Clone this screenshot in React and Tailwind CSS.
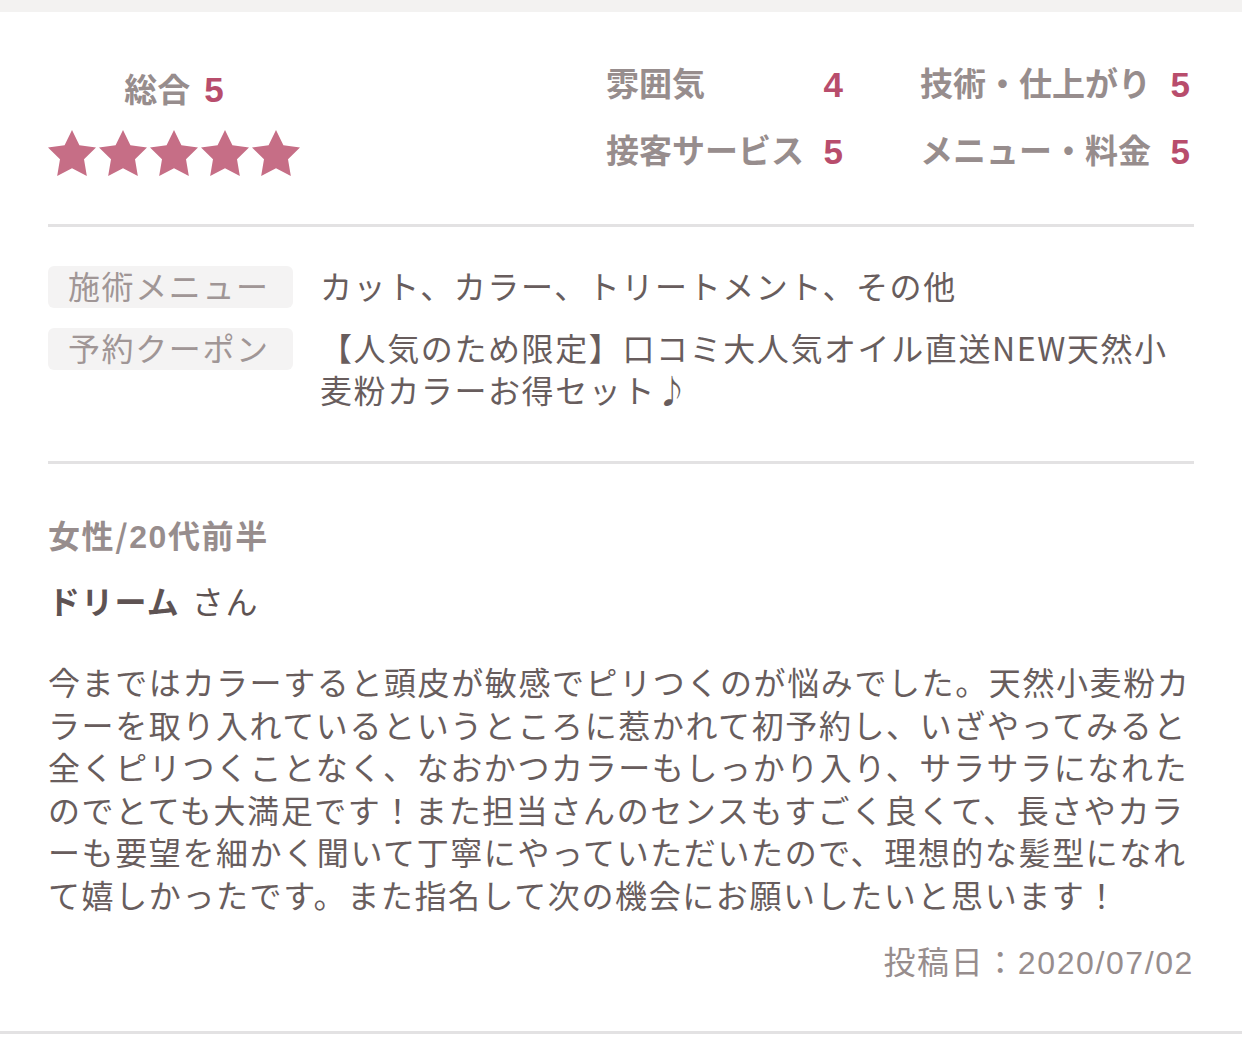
import React from 'react';

const Star = () => (
  <svg width="48" height="46" viewBox="2 2 20 19.02" preserveAspectRatio="none">
    <path
      d="M12 2l3.09 6.26L22 9.27l-5 4.87 1.18 6.88L12 17.77l-6.18 3.25L7 14.14 2 9.27l6.91-1.01L12 2z"
      fill="#c66e86"
    />
  </svg>
);

const Num = ({ children }) => <span className="font-['Liberation_Sans'] leading-none">{children}</span>;

const Score = ({ label, value }) => (
  <div className="flex items-center justify-between leading-[42px]">
    <span className="text-[#978d8d] font-bold">{label}</span>
    <span className="text-[35px] text-[#b84d6c] font-bold">
      <Num>{value}</Num>
    </span>
  </div>
);

const App = () => {
  const scores = [
    { label: '雰囲気', value: 4 },
    { label: '技術・仕上がり', value: 5 },
    { label: '接客サービス', value: 5 },
    { label: 'メニュー・料金', value: 5 },
  ];

  const body =
    '今まではカラーすると頭皮が敏感でピリつくのが悩みでした。天然小麦粉カラーを取り入れているというところに惹かれて初予約し、いざやってみると全くピリつくことなく、なおかつカラーもしっかり入り、サラサラになれたのでとても大満足です！また担当さんのセンスもすごく良くて、長さやカラーも要望を細かく聞いて丁寧にやっていただいたので、理想的な髪型になれて嬉しかったです。また指名して次の機会にお願いしたいと思います！';

  return (
    <div
      className="w-full bg-white"
      style={{ fontFamily: '"Noto Sans CJK JP", "Noto Sans", sans-serif' }}
    >
      <div className="h-[12px] bg-[#f3f2f1]" />

      <div className="px-[48px]">
        {/* ratings */}
        <div className="flex h-[212px] items-start">
          <div className="flex w-[252px] flex-col items-center pt-[54px]">
            <div className="text-[33px] font-bold leading-[42px]">
              <span className="text-[#978d8d]">総合</span>
              <span className="ml-[14px] text-[35px] text-[#b84d6c]">
                <Num>5</Num>
              </span>
            </div>
            <div className="mt-[21px] flex gap-[3px]">
              {[0, 1, 2, 3, 4].map((i) => (
                <Star key={i} />
              ))}
            </div>
          </div>
          <div className="ml-auto mr-[4px] grid grid-cols-[237px_270px] gap-x-[77px] gap-y-[25px] pt-[49px] text-[33px]">
            {scores.map((s) => (
              <Score key={s.label} label={s.label} value={s.value} />
            ))}
          </div>
        </div>

        <div className="h-[3px] bg-[#e3e2e3]" />

        {/* menu & coupon */}
        <div className="flex flex-col gap-[20px] pt-[39px] pb-[49px] text-[32px] tracking-[1.6px]">
          <div className="flex items-start">
            <div className="h-[42px] w-[245px] shrink-0 rounded-[6px] bg-[#f4f3f3] pl-[20px] leading-[38px] text-[#a09696]">
              施術メニュー
            </div>
            <div className="-mt-[2px] ml-[27px] flex-1 leading-[42px] text-[#685d5d]">
              カット、カラー、トリートメント、その他
            </div>
          </div>
          <div className="flex items-start">
            <div className="h-[42px] w-[245px] shrink-0 rounded-[6px] bg-[#f4f3f3] pl-[20px] leading-[38px] text-[#a09696]">
              予約クーポン
            </div>
            <div className="-mt-[2px] mb-[2px] ml-[27px] flex-1 leading-[42px] text-[#685d5d]">
              【人気のため限定】口コミ大人気オイル直送NEW天然小麦粉カラーお得セット♪
            </div>
          </div>
        </div>

        <div className="h-[3px] bg-[#e3e2e3]" />

        {/* review */}
        <div className="pt-[49px] pb-[50px]">
          <div className="text-[32px] font-bold leading-[42px] tracking-[1.6px] text-[#978d8d]">
            女性/<Num>20</Num>代前半
          </div>
          <div className="mt-[24px] text-[32px] leading-[42px] text-[#5e5353]">
            <span className="font-bold tracking-[1.2px]">ドリーム</span>
            <span className="ml-[12px] tracking-[1.6px]">さん</span>
          </div>
          <p className="mt-[39px] text-[32px] leading-[42.6px] tracking-[1.6px] text-[#685d5d]">{body}</p>
          <div className="mt-[23px] text-right text-[32px] leading-[42px] tracking-[1.6px] text-[#978d8d]">
            投稿日：<Num>2020/07/02</Num>
          </div>
        </div>
      </div>

      <div className="h-[3px] bg-[#e3e2e3]" />
      <div className="h-[10px] bg-white" />
    </div>
  );
};

export default App;
